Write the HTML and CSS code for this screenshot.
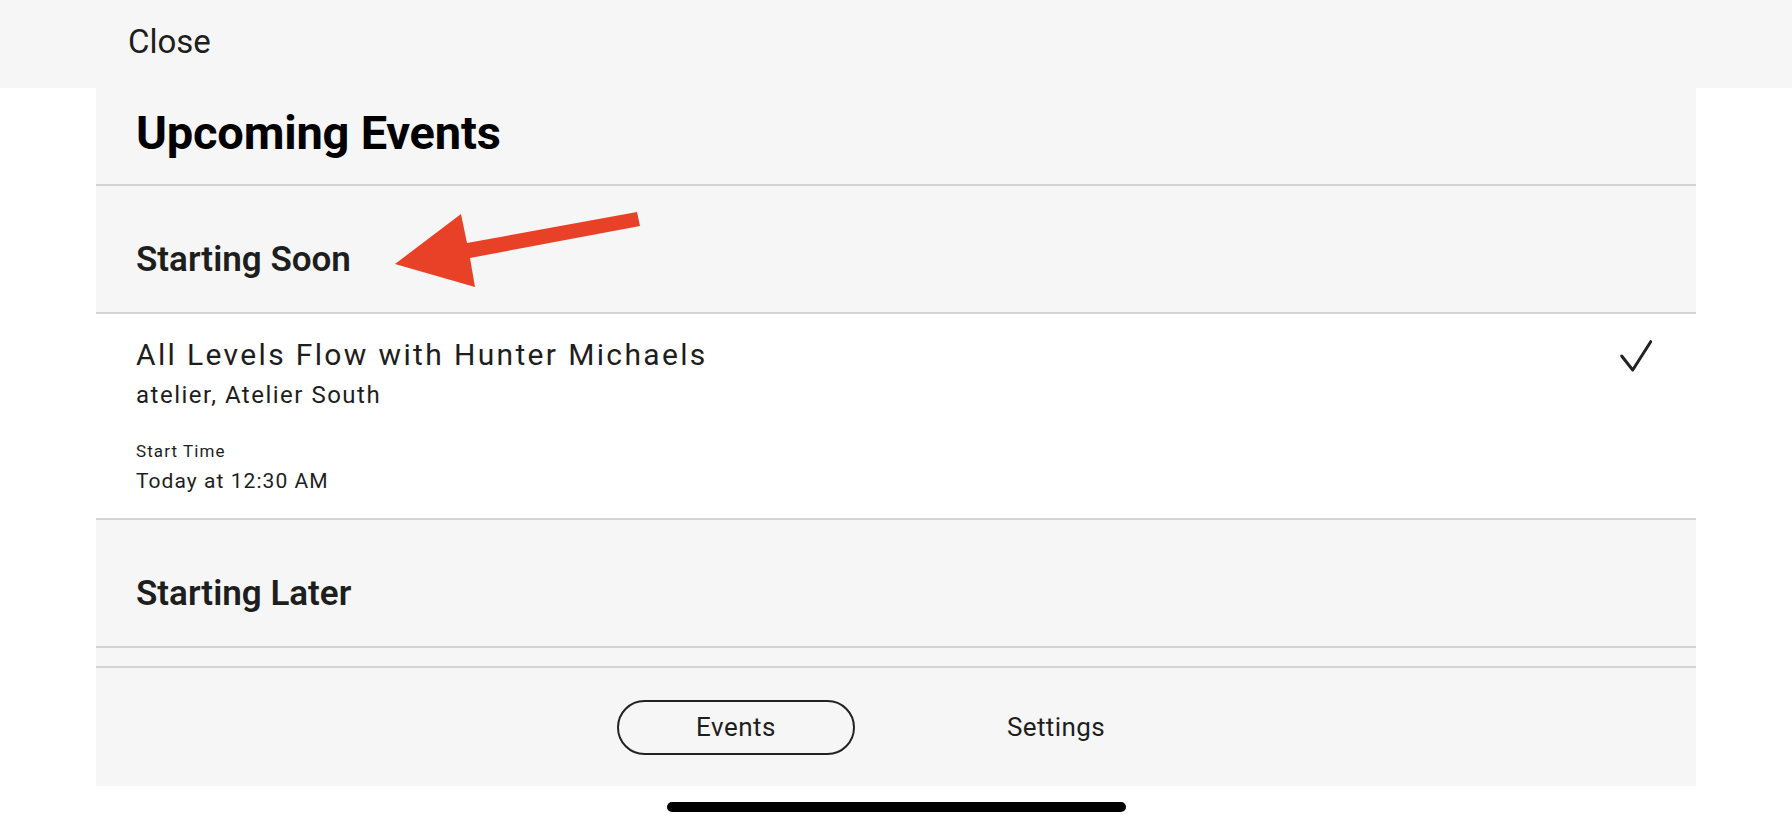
FILE: index.html
```html
<!DOCTYPE html>
<html lang="en">
<head>
<meta charset="utf-8">
<title>Upcoming Events</title>
<link rel="stylesheet" href="styles.css">
</head>
<body>
  <header class="topbar">
    <span class="close">Close</span>
  </header>
  <main class="panel">
    <div class="title-block"><h1 class="title">Upcoming Events</h1></div>
    <div class="sep"></div>
    <section class="section-head">
      <h2 class="section-title">Starting Soon</h2>
      <svg class="arrow" width="560" height="126" viewBox="0 0 560 126" aria-hidden="true">
        <polygon points="299,78 365,28 371,57 541,26 544,40 374,72 379,101" fill="#e94128"/>
      </svg>
    </section>
    <div class="sep"></div>
    <article class="event-row">
      <div class="event-info">
        <div class="event-title">All Levels Flow with Hunter Michaels</div>
        <div class="event-place">atelier, Atelier South</div>
        <div class="event-label">Start Time</div>
        <div class="event-time">Today at 12:30 AM</div>
      </div>
      <svg class="check" width="36" height="36" viewBox="0 0 36 36" aria-hidden="true">
        <path d="M3.7 18 L14.7 32 L32.7 3.7" fill="none" stroke="#222" stroke-width="3" stroke-linecap="round" stroke-linejoin="round"/>
      </svg>
    </article>
    <div class="sep"></div>
    <section class="section-head">
      <h2 class="section-title">Starting Later</h2>
    </section>
    <div class="sep"></div>
    <div class="list-gap"></div>
    <div class="sep"></div>
    <nav class="footer">
      <div class="tab"><span class="pill">Events</span></div>
      <div class="tab"><span class="tab-label">Settings</span></div>
    </nav>
  </main>
  <div class="home-wrap"><div class="home-indicator"></div></div>
</body>
</html>
```

FILE: styles.css
```css
* { box-sizing: border-box; }
html, body {
  margin: 0;
  padding: 0;
  background: #ffffff;
  font-family: Roboto, "Liberation Sans", sans-serif;
  color: #1c1c1c;
}
body {
  width: 1792px;
  height: 828px;
  overflow: hidden;
}
.topbar {
  height: 88px;
  background: #f6f6f6;
  padding: 25px 0 0 128px;
}
.close {
  display: block;
  font-size: 33px;
  line-height: 33px;
  font-weight: 400;
  color: #1e1e1e;
}
.panel {
  margin: 0 96px;
  width: 1600px;
  background: #f6f6f6;
  display: flex;
  flex-direction: column;
}
.title-block {
  height: 96px;
  padding: 21px 40px 0;
}
.title {
  margin: 0;
  font-size: 47px;
  line-height: 47px;
  font-weight: 700;
  color: #000;
  letter-spacing: -0.2px;
}
.sep {
  height: 2px;
  background: #d4d4d4;
}
.section-head {
  position: relative;
  height: 126px;
  padding: 56px 40px 0;
}
.section-title {
  margin: 0;
  font-size: 35px;
  line-height: 35px;
  font-weight: 600;
  color: #1e1e1e;
}
.arrow {
  position: absolute;
  left: 0;
  top: 0;
  overflow: visible;
}
.event-row {
  height: 204px;
  background: #ffffff;
  display: flex;
  justify-content: space-between;
  align-items: flex-start;
  padding: 26px 42px 0 40px;
}
.event-info {
  display: flex;
  flex-direction: column;
}
.event-title {
  font-size: 30px;
  line-height: 30px;
  letter-spacing: 2.35px;
  color: #1e1e1e;
}
.event-place {
  margin-top: 13px;
  font-size: 24px;
  line-height: 24px;
  letter-spacing: 1.5px;
  color: #1e1e1e;
}
.event-label {
  margin-top: 36px;
  font-size: 17px;
  line-height: 17px;
  letter-spacing: 1.1px;
  color: #1e1e1e;
}
.event-time {
  margin-top: 11px;
  font-size: 21px;
  line-height: 21px;
  letter-spacing: 1.05px;
  color: #1e1e1e;
}
.check {
  margin-top: -2px;
  flex: none;
}
.list-gap {
  height: 18px;
}
.footer {
  height: 118px;
  display: flex;
  justify-content: center;
  align-items: center;
}
.tab {
  width: 320px;
  display: flex;
  justify-content: center;
  align-items: center;
}
.pill {
  width: 238px;
  height: 55px;
  border: 2.5px solid #222;
  border-radius: 28px;
  display: flex;
  justify-content: center;
  align-items: center;
  font-size: 26px;
  letter-spacing: 0.5px;
  color: #1e1e1e;
}
.tab-label {
  font-size: 26px;
  letter-spacing: 0.4px;
  color: #1e1e1e;
}
.home-wrap {
  display: flex;
  justify-content: center;
  padding-top: 16px;
}
.home-indicator {
  width: 459px;
  height: 10px;
  border-radius: 5px;
  background: #000;
}
```
